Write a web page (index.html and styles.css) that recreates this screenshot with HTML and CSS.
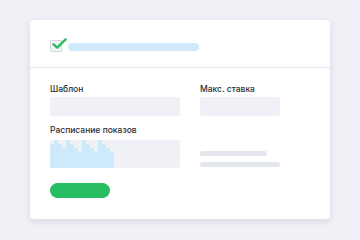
FILE: index.html
```html
<!DOCTYPE html>
<html lang="ru">
<head>
<meta charset="utf-8">
<link rel="stylesheet" href="styles.css">
</head>
<body>
<div class="card">
  <div class="card-head">
    <span class="check">
      <svg width="16" height="14" viewBox="0 0 16 14"><path d="M2.6 6.4 L6.2 9.6 L14.6 1.4" fill="none" stroke="#27bd61" stroke-width="2.4" stroke-linecap="round" stroke-linejoin="round"/></svg>
    </span>
    <span class="title-bar"></span>
  </div>
  <div class="card-body">
    <div class="grid">
      <div class="label">Шаблон</div>
      <div class="label">Макс. ставка</div>
      <div class="field"></div>
      <div class="field"></div>
      <div class="label label-gap">Расписание показов</div>
      <div></div>
      <div class="chart">
        <div class="col" style="height:24px"></div>
        <div class="col" style="height:28px"></div>
        <div class="col" style="height:24px"></div>
        <div class="col" style="height:20px"></div>
        <div class="col" style="height:28px"></div>
        <div class="col" style="height:24px"></div>
        <div class="col" style="height:20px"></div>
        <div class="col" style="height:17px"></div>
        <div class="col" style="height:28px"></div>
        <div class="col" style="height:24px"></div>
        <div class="col" style="height:20px"></div>
        <div class="col" style="height:17px"></div>
        <div class="col" style="height:28px"></div>
        <div class="col" style="height:24px"></div>
        <div class="col" style="height:20px"></div>
        <div class="col" style="height:17px"></div>
      </div>
      <div class="lines">
        <span class="line line-short"></span>
        <span class="line"></span>
      </div>
    </div>
    <div class="btn"></div>
  </div>
</div>
</body>
</html>
```
FILE: styles.css
```css
html, body {
  margin: 0;
  padding: 0;
}
body {
  background: #f0f1f6;
  width: 360px;
  height: 240px;
  overflow: hidden;
  font-family: "Inter", "Noto Sans", sans-serif;
  color: #2c2e33;
}
.card {
  margin: 20px 0 0 30px;
  width: 300px;
  height: 199px;
  background: #fff;
  border-radius: 4px;
  box-shadow: 0 2px 7px rgba(40, 45, 70, 0.13);
  box-sizing: border-box;
}
.card-head {
  display: flex;
  align-items: center;
  gap: 6px;
  padding: 20px 20px 15px;
  border-bottom: 1px solid #e6e7ee;
}
.check {
  position: relative;
  width: 10px;
  height: 10px;
  border: 1.5px solid #d3d6de;
  background: #f2f3f6;
  border-radius: 1px;
}
.check svg {
  position: absolute;
  left: 0px;
  top: -3px;
}
.title-bar {
  width: 131px;
  height: 8px;
  border-radius: 4px;
  background: #cfe9fa;
  margin-top: 1px;
}
.card-body {
  padding: 15px 20px 20px;
}
.grid {
  display: grid;
  grid-template-columns: 130px 80px;
  column-gap: 20px;
}
.label {
  font-size: 8.5px;
  font-weight: 500;
  line-height: 12px;
  height: 12px;
  margin-bottom: 2px;
  white-space: nowrap;
}
.label-gap {
  margin-top: 8px;
  margin-bottom: 4px;
}
.field {
  height: 19px;
  background: #f0f1f6;
  border-radius: 2px;
}
.chart {
  height: 28px;
  background: #f0f1f6;
  border-radius: 2px;
  display: flex;
  align-items: flex-end;
  overflow: hidden;
}
.col {
  width: 4px;
  background: #cde9fa;
}
.lines {
  align-self: end;
  display: flex;
  flex-direction: column;
  gap: 6px;
  margin-bottom: 1px;
}
.line {
  display: block;
  height: 5px;
  width: 80px;
  border-radius: 3px;
  background: #e4e6ee;
}
.line-short {
  width: 67px;
}
.btn {
  margin-top: 15px;
  width: 60px;
  height: 15px;
  border-radius: 8px;
  background: #27bd61;
}
```
